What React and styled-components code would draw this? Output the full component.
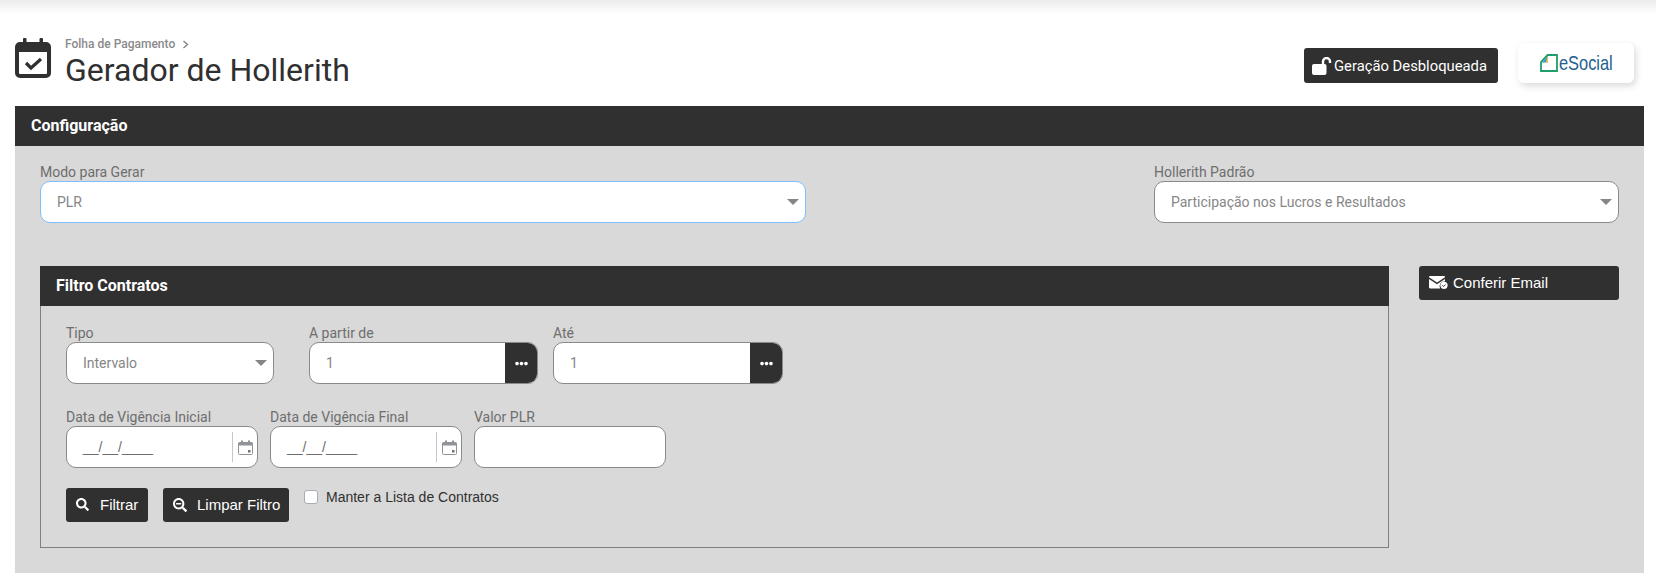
import styled, { createGlobalStyle } from "styled-components";
import { FaSearch, FaSearchMinus, FaEllipsisH } from "react-icons/fa";

const GlobalStyle = createGlobalStyle`
  html, body {
    margin: 0;
    padding: 0;
    background: #fff;
    overflow: hidden;
  }
  * { box-sizing: border-box; }
  body { font-family: "Roboto", "Liberation Sans", sans-serif; }
`;

function CalendarCheckIcon() {
  return (
    <svg width="36" height="41" viewBox="0 0 36 41">
      <rect x="2" y="7" width="32" height="32" rx="3" fill="none" stroke="#303030" stroke-width="4" />
      <rect x="2" y="7" width="32" height="8" fill="#303030" />
      <rect x="8" y="1" width="3.5" height="8" rx="1" fill="#303030" />
      <rect x="24.5" y="1" width="3.5" height="8" rx="1" fill="#303030" />
      <path d="M11 26l5 5 10-9" fill="none" stroke="#303030" stroke-width="3.2" />
    </svg>
  );
}

function UnlockIcon() {
  return (
    <svg width="20" height="18" viewBox="0 0 20 18" style={{ flex: "none" }}>
      <rect x="0" y="7" width="14.500" height="11" rx="2" fill="#fff" />
      <path d="M11 8V4.500a3.500 3.500 0 0 1 7 0V6" fill="none" stroke="#fff" stroke-width="2.400" />
    </svg>
  );
}

function MailCheckIcon() {
  return (
    <svg width="19" height="13" viewBox="0 0 19 13">
      <path d="M0 1.2C0 .5.5 0 1.2 0h13.600c.7 0 1.200.5 1.200 1.200L8 6.600 0 1.200z" fill="#fff" />
      <path d="M0 3l8 5.300L16 3v2.600a4.600 4.600 0 0 0-4.800 6.900H1.200C.5 12.500 0 12 0 11.300V3z" fill="#fff" />
      <circle cx="15" cy="9.300" r="3.600" fill="#fff" />
      <path d="M13.400 9.300l1.200 1.200 2-2" fill="none" stroke="#303030" stroke-width="1" />
    </svg>
  );
}

function SmallCalendarIcon() {
  return (
    <svg width="15" height="15" viewBox="0 0 15 15">
      <rect x="0.500" y="2.500" width="14" height="12" rx="1" fill="#fdfdfd" stroke="#8f9296" />
      <rect x="0.500" y="2.500" width="14" height="3" fill="#8f9296" />
      <rect x="3" y="0.500" width="2" height="3" fill="#8f9296" />
      <rect x="10" y="0.500" width="2" height="3" fill="#8f9296" />
      <rect x="10" y="10" width="2.500" height="2.500" fill="#6f7276" />
    </svg>
  );
}

function ESocialLogo() {
  return (
    <svg width="18" height="18" viewBox="0 0 18 18">
      <path d="M7.500 1H17v16H1V8z" fill="#fff" stroke="#1f9e6a" stroke-width="1.800" />
      <path d="M8 1.500V8.500H1.500z" fill="#2f9fd8" />
      <path d="M8 1.500L5.500 8.500H8z" fill="#f2c230" />
    </svg>
  );
}

function ChevronIcon() {
  return (
    <svg width="7" height="9" viewBox="0 0 7 9">
      <path d="M1.500 1l4 3.500-4 3.500" fill="none" stroke="#808080" stroke-width="1.300" />
    </svg>
  );
}

function SelectField({ label, value, width, focused }) {
  return (
    <Field $width={width}>
      <Label>{label}</Label>
      <SelectBox $focused={focused}>
        <SelectValue>{value}</SelectValue>
        <Caret />
      </SelectBox>
    </Field>
  );
}

function LookupField({ label, value, width }) {
  return (
    <Field $width={width}>
      <Label>{label}</Label>
      <LookupBox>
        <LookupInput>{value}</LookupInput>
        <LookupButton><FaEllipsisH size={13} /></LookupButton>
      </LookupBox>
    </Field>
  );
}

function DateField({ label }) {
  return (
    <Field $width="192px">
      <Label>{label}</Label>
      <InputBox>
        <DateMask>__/__/____</DateMask>
        <DateAddon><SmallCalendarIcon /></DateAddon>
      </InputBox>
    </Field>
  );
}

export default function App() {
  return (
    <Page>
      <GlobalStyle />
      <TopShadow />
      <Header>
        <TitleGroup>
          <CalendarCheckIcon />
          <TitleText>
            <Breadcrumb>Folha de Pagamento <ChevronIcon /></Breadcrumb>
            <Title>Gerador de Hollerith</Title>
          </TitleText>
        </TitleGroup>
        <HeaderActions>
          <StatusButton><UnlockIcon />Geração Desbloqueada</StatusButton>
          <LogoCard>
            <ESocialLogo />
            <LogoText>eSocial</LogoText>
          </LogoCard>
        </HeaderActions>
      </Header>

      <Panel>
        <PanelBar>Configuração</PanelBar>
        <PanelBody>
          <SpreadRow>
            <SelectField label="Modo para Gerar" value="PLR" width="766px" focused />
            <SelectField label="Hollerith Padrão" value="Participação nos Lucros e Resultados" width="465px" />
          </SpreadRow>

          <FilterRow>
            <FilterBox>
              <PanelBar>Filtro Contratos</PanelBar>
              <FilterBody>
                <FieldRow>
                  <SelectField label="Tipo" value="Intervalo" width="208px" />
                  <LookupSpacer />
                  <LookupField label="A partir de" value="1" width="229px" />
                  <LookupField label="Até" value="1" width="230px" />
                </FieldRow>
                <DateRow>
                  <DateField label="Data de Vigência Inicial" />
                  <DateField label="Data de Vigência Final" />
                  <Field $width="192px">
                    <Label>Valor PLR</Label>
                    <InputBox />
                  </Field>
                </DateRow>
                <ActionRow>
                  <ActionButton $width="82px" $gap="11px"><FaSearch size={13} />Filtrar</ActionButton>
                  <ActionButton $width="126px" $gap="10px"><FaSearchMinus size={14} />Limpar Filtro</ActionButton>
                  <CheckRow>
                    <CheckBox />
                    <CheckLabel>Manter a Lista de Contratos</CheckLabel>
                  </CheckRow>
                </ActionRow>
              </FilterBody>
            </FilterBox>
            <EmailButton><MailCheckIcon />Conferir Email</EmailButton>
          </FilterRow>
        </PanelBody>
      </Panel>
    </Page>
  );
}

const Page = styled.div`
  width: 1656px;
  height: 579px;
  overflow: hidden;
  color: #303030;
`;

const TopShadow = styled.div`
  height: 14px;
  background: linear-gradient(to bottom, #ececec, #ffffff);
`;

const Header = styled.header`
  height: 92px;
  padding: 23px 22px 0 15px;
  display: flex;
  justify-content: space-between;
  align-items: flex-start;
`;

const TitleGroup = styled.div`
  display: flex;
  align-items: flex-start;
  gap: 14px;
`;

const TitleText = styled.div`
  display: flex;
  flex-direction: column;
`;

const Breadcrumb = styled.div`
  display: flex;
  align-items: center;
  gap: 7px;
  font-size: 12px;
  line-height: 14px;
  color: #8a8a8a;
  font-weight: 500;
`;

const Title = styled.h1`
  margin: 0;
  font-size: 32px;
  line-height: 38px;
  font-weight: 400;
  color: #303030;
`;

const HeaderActions = styled.div`
  display: flex;
  align-items: flex-end;
  gap: 20px;
  padding-top: 6px;
`;

const StatusButton = styled.div`
  width: 194px;
  height: 35px;
  padding: 0 8px;
  display: flex;
  align-items: center;
  gap: 2px;
  background: #303030;
  color: #fff;
  border-radius: 3px;
  font-size: 14.800px;
  white-space: nowrap;
`;

const LogoCard = styled.div`
  width: 116px;
  height: 40px;
  padding-left: 22px;
  display: flex;
  align-items: center;
  gap: 1px;
  background: #fff;
  border-radius: 6px;
  box-shadow: 2px 3px 7px rgba(0, 0, 0, 0.15);
`;

const LogoText = styled.span`
  display: inline-block;
  width: 54px;
  font-family: "Liberation Sans", sans-serif;
  font-size: 21px;
  color: #23608f;
  transform: scaleX(0.78);
  transform-origin: left center;
  white-space: nowrap;
`;

const Panel = styled.section`
  width: 1629px;
  margin-left: 15px;
  background: #d9d9d9;
`;

const PanelBar = styled.div`
  height: 40px;
  padding: 0 0 2px 16px;
  display: flex;
  align-items: center;
  background: #303030;
  color: #fff;
  font-size: 16px;
  font-weight: 700;
`;

const PanelBody = styled.div`
  padding: 17px 25px 25px;
`;

const SpreadRow = styled.div`
  display: flex;
  justify-content: space-between;
`;

const Field = styled.div`
  width: ${(p) => p.$width};
  flex: none;
`;

const Label = styled.div`
  height: 18px;
  font-size: 14px;
  line-height: 18px;
  color: #6e6e6e;
`;

const SelectBox = styled.div`
  height: 42px;
  padding: 0 6px 0 16px;
  display: flex;
  align-items: center;
  justify-content: space-between;
  background: #fff;
  border: 1px solid ${(p) => (p.$focused ? "#80bdff" : "#8a8a8a")};
  border-radius: 10px;
`;

const SelectValue = styled.span`
  font-size: 14px;
  color: #868686;
`;

const Caret = styled.span`
  width: 0;
  height: 0;
  border-left: 6px solid transparent;
  border-right: 6px solid transparent;
  border-top: 6px solid #868686;
`;

const FilterRow = styled.div`
  margin-top: 43px;
  display: flex;
  justify-content: space-between;
  align-items: flex-start;
`;

const FilterBox = styled.div`
  width: 1349px;
`;

const FilterBody = styled.div`
  height: 242px;
  padding: 18px 25px 0;
  border: 1px solid #808080;
  border-top: none;
`;

const FieldRow = styled.div`
  display: flex;
  gap: 15px;
`;

const LookupSpacer = styled.div`
  width: 20px;
  margin-right: -15px;
`;

const LookupBox = styled.div`
  height: 42px;
  display: flex;
  border: 1px solid #8a8a8a;
  border-radius: 10px;
  overflow: hidden;
  background: #fff;
`;

const LookupInput = styled.div`
  flex: 1;
  padding-left: 16px;
  display: flex;
  align-items: center;
  font-size: 14px;
  color: #868686;
`;

const LookupButton = styled.div`
  width: 32px;
  display: flex;
  align-items: center;
  justify-content: center;
  background: #303030;
  color: #fff;
`;

const DateRow = styled.div`
  margin-top: 24px;
  display: flex;
  gap: 12px;
`;

const InputBox = styled.div`
  height: 42px;
  padding-left: 16px;
  display: flex;
  align-items: center;
  justify-content: space-between;
  background: #fff;
  border: 1px solid #8a8a8a;
  border-radius: 10px;
`;

const DateMask = styled.span`
  font-family: "Liberation Sans", sans-serif;
  font-size: 14px;
  color: #6e6e6e;
`;

const DateAddon = styled.span`
  width: 25px;
  height: 30px;
  display: flex;
  align-items: center;
  justify-content: center;
  border-left: 1px solid #c4c8cc;
`;

const ActionRow = styled.div`
  margin-top: 20px;
  display: flex;
  align-items: flex-start;
  gap: 15px;
`;

const ActionButton = styled.div`
  width: ${(p) => p.$width};
  height: 34px;
  padding: 0 0 1px 10px;
  display: flex;
  align-items: center;
  gap: ${(p) => p.$gap};
  background: #303030;
  color: #fff;
  border-radius: 3px;
  font-family: "Liberation Sans", sans-serif;
  font-size: 15px;
  white-space: nowrap;
`;

const CheckRow = styled.div`
  display: flex;
  align-items: center;
  gap: 8px;
  height: 18px;
`;

const CheckBox = styled.span`
  width: 14px;
  height: 14px;
  background: #fff;
  border: 1px solid #a8adb3;
  border-radius: 3px;
`;

const CheckLabel = styled.span`
  font-family: "Liberation Sans", sans-serif;
  font-size: 14px;
  color: #303030;
`;

const EmailButton = styled.div`
  width: 200px;
  height: 34px;
  padding: 0 10px 1px;
  display: flex;
  align-items: center;
  gap: 5px;
  background: #303030;
  color: #fff;
  border-radius: 3px;
  font-family: "Liberation Sans", sans-serif;
  font-size: 15px;
`;
